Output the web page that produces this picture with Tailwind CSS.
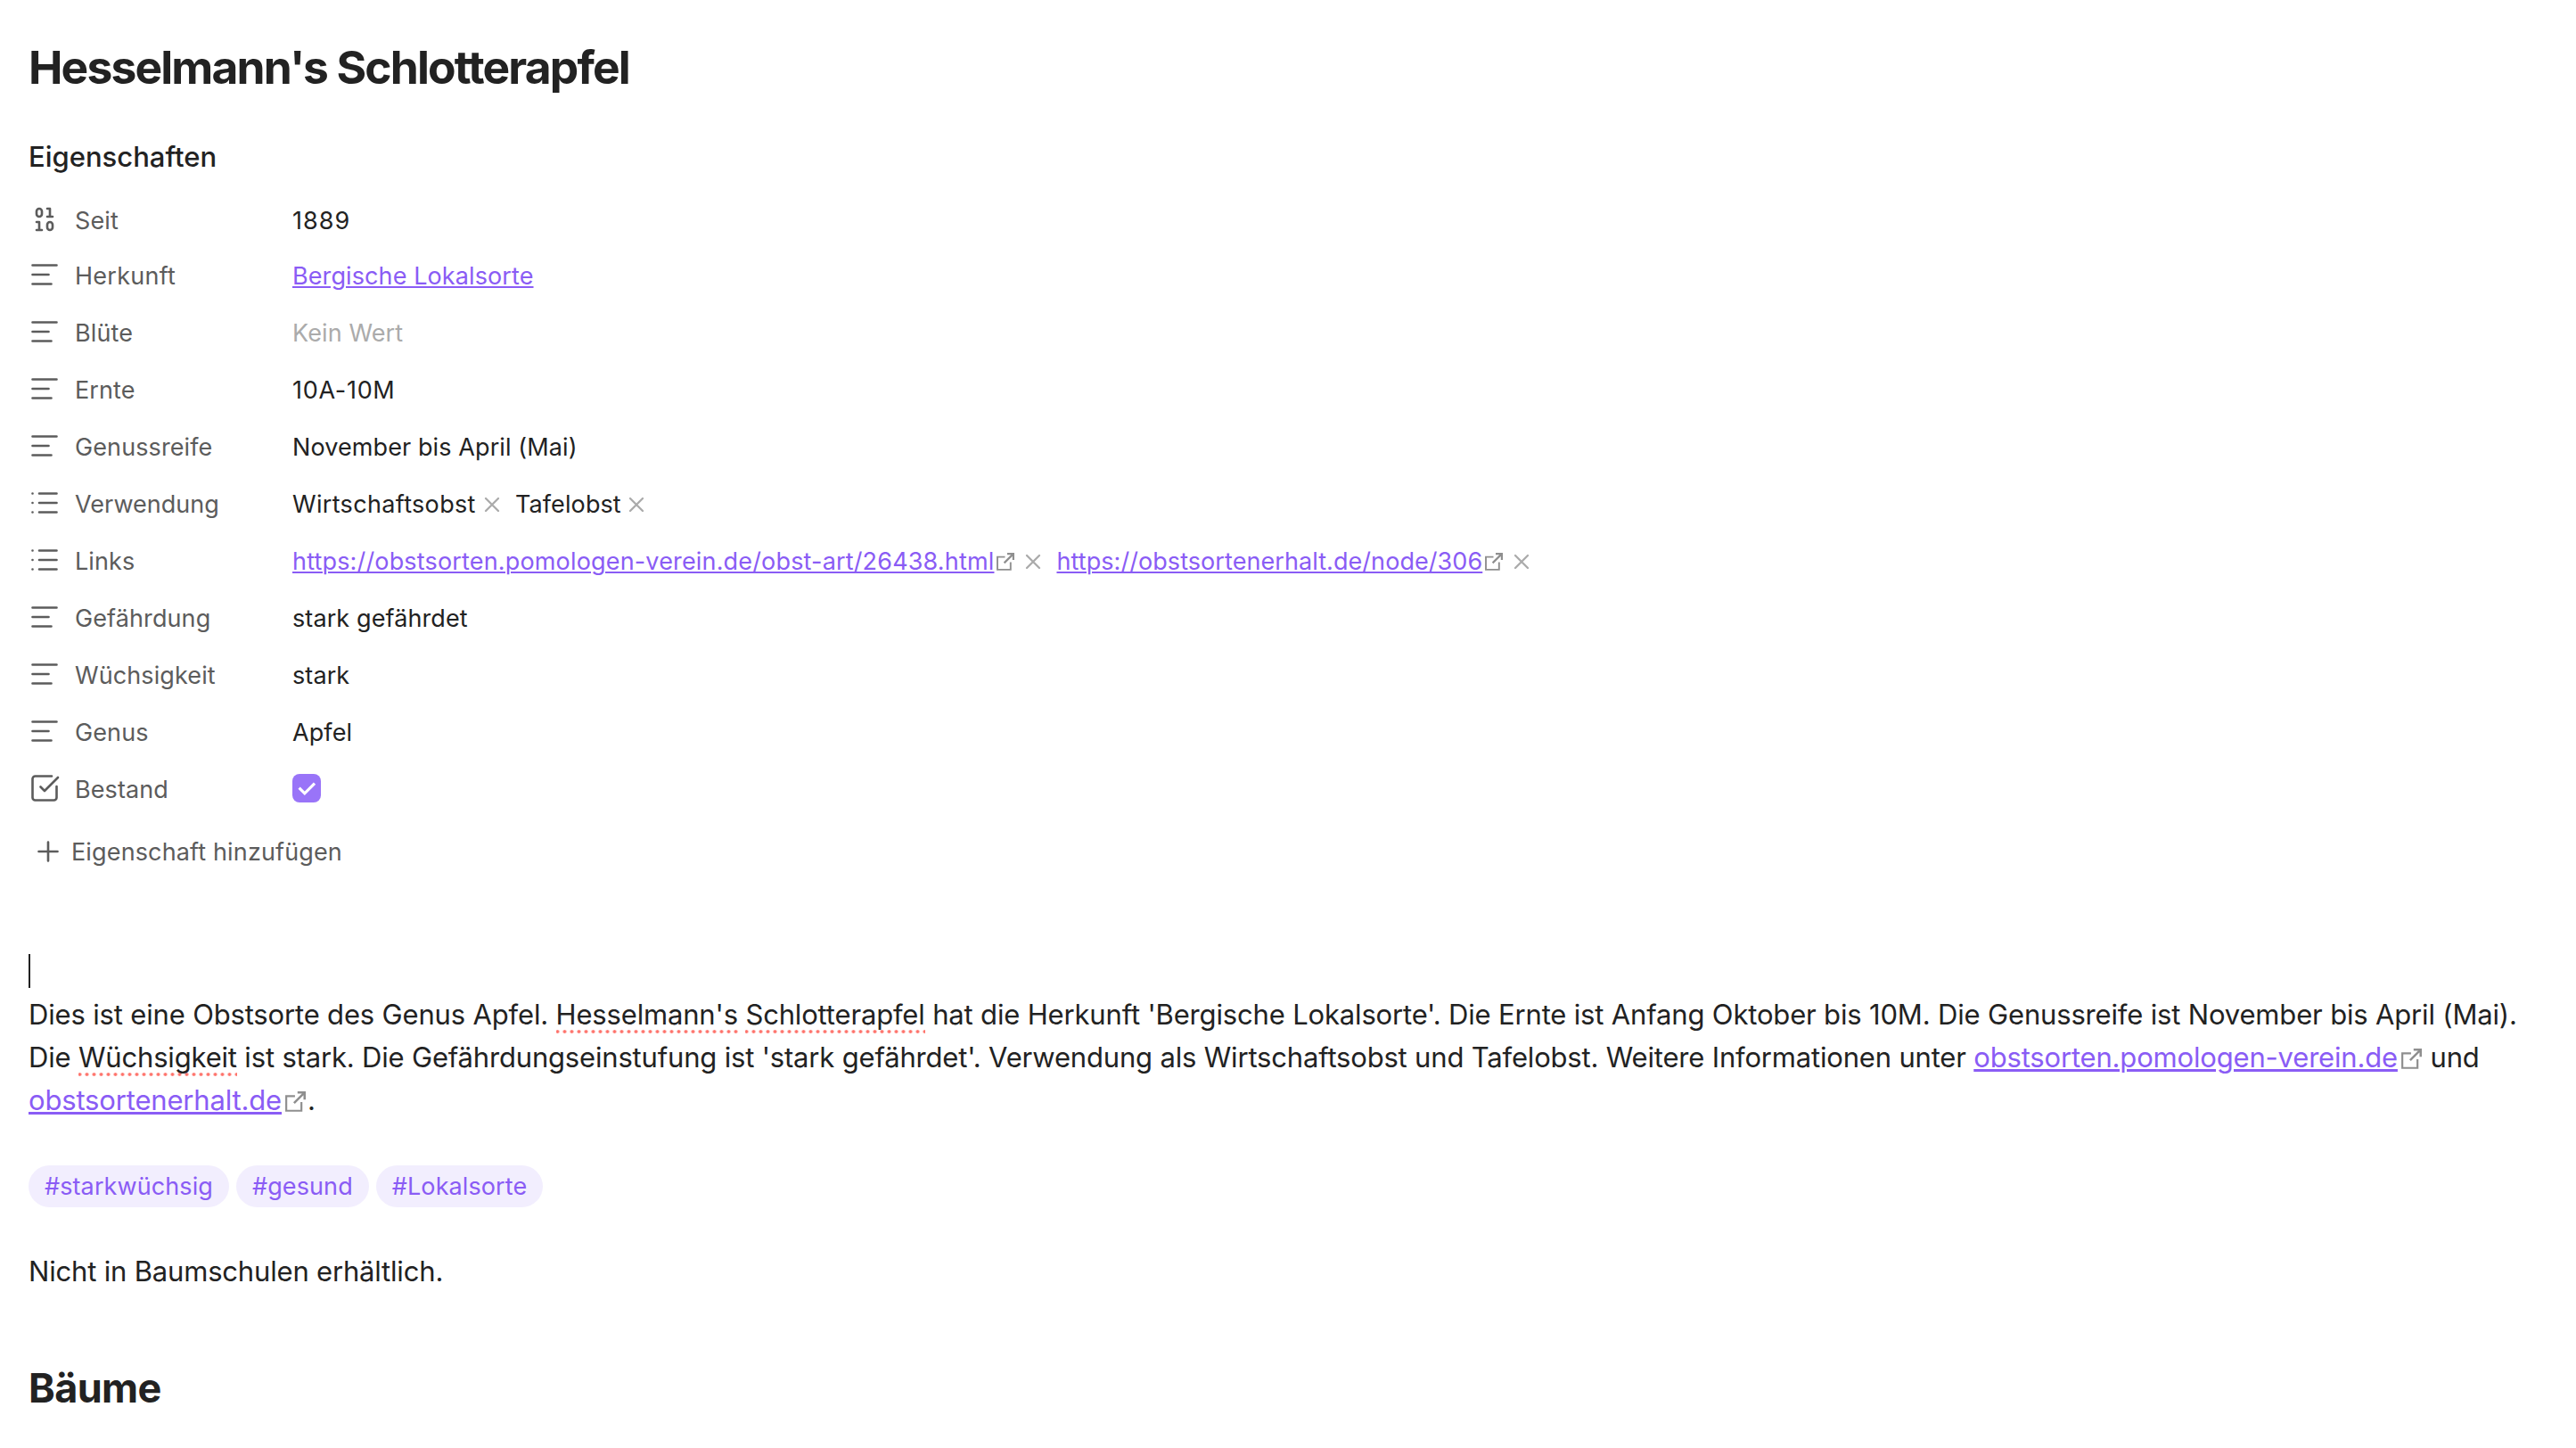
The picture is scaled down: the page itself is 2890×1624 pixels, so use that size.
<!DOCTYPE html>
<html lang="de">
<head>
    <meta charset="UTF-8">
    <meta name="viewport" content="width=device-width, initial-scale=1.0">
    <title>Hesselmann's Schlotterapfel</title>
    <script src="https://cdn.jsdelivr.net/npm/@tailwindcss/browser@4"></script>
</head>
<body class="bg-white text-[#222222] font-['Inter',sans-serif] overflow-hidden">
    <!-- Icon sprites -->
    <svg class="hidden">
        <symbol id="i-text" viewBox="0 0 24 24"><path d="M21 5H3M15 12H3M17 19H3"/></symbol>
        <symbol id="i-list" viewBox="0 0 24 24"><path d="M3 5h.01M3 12h.01M3 19h.01M8 5h13M8 12h13M8 19h13"/></symbol>
        <symbol id="i-binary" viewBox="0 0 24 24"><rect x="14" y="14" width="4" height="6" rx="2"/><rect x="6" y="4" width="4" height="6" rx="2"/><path d="M6 20h4M14 10h4M6 14h2v6M14 4h2v6"/></symbol>
        <symbol id="i-check" viewBox="0 0 24 24"><path d="M21 10.656V19a2 2 0 0 1-2 2H5a2 2 0 0 1-2-2V5a2 2 0 0 1 2-2h12.344"/><path d="m9 11 3 3L22 4"/></symbol>
        <symbol id="i-x" viewBox="0 0 24 24"><path d="M18 6 6 18M6 6l12 12"/></symbol>
        <symbol id="i-ext" viewBox="0 0 20 20"><path d="M9.5 4.6H1v14.3h14.8V10.5" stroke-width="1.9"/><path d="M8.6 11.4 18.4 1.6M12 1.1h6.9V8" stroke-width="2.2"/></symbol>
    </svg>

    <main class="px-8 pt-11">
        <h1 class="h-[62px] leading-[62px] text-[51.5px] font-bold tracking-[-1.85px] whitespace-nowrap">Hesselmann's Schlotterapfel</h1>

        <!-- Properties -->
        <h2 class="mt-[46px] h-12 leading-[48px] text-[31px] font-[550] tracking-[0px]">Eigenschaften</h2>
        <div class="mt-[17px] text-[27px] leading-[40px] tracking-[0.1px] whitespace-nowrap">
            <div class="flex items-center h-[61px]">
                <div class="flex items-center gap-4 w-[296px] text-[#5c5c5c]">
                    <svg class="size-9 mb-1 fill-none stroke-current stroke-[1.75] [stroke-linecap:round] [stroke-linejoin:round]"><use href="#i-binary"/></svg>
                    <span>Seit</span>
                </div>
                <div class="tracking-[1px]">1889</div>
            </div>
            <div class="flex items-center h-16">
                <div class="flex items-center gap-4 w-[296px] text-[#5c5c5c]">
                    <svg class="size-9 mb-1 fill-none stroke-current stroke-[1.75] [stroke-linecap:round]"><use href="#i-text"/></svg>
                    <span class="tracking-[0.25px]">Herkunft</span>
                </div>
                <a class="text-[#8a5cf5] underline decoration-2 underline-offset-2">Bergische Lokalsorte</a>
            </div>
            <div class="flex items-center h-16">
                <div class="flex items-center gap-4 w-[296px] text-[#5c5c5c]">
                    <svg class="size-9 mb-1 fill-none stroke-current stroke-[1.75] [stroke-linecap:round]"><use href="#i-text"/></svg>
                    <span>Blüte</span>
                </div>
                <div class="text-[#ababab]">Kein Wert</div>
            </div>
            <div class="flex items-center h-16">
                <div class="flex items-center gap-4 w-[296px] text-[#5c5c5c]">
                    <svg class="size-9 mb-1 fill-none stroke-current stroke-[1.75] [stroke-linecap:round]"><use href="#i-text"/></svg>
                    <span>Ernte</span>
                </div>
                <div class="tracking-[0.7px]">10A-10M</div>
            </div>
            <div class="flex items-center h-16">
                <div class="flex items-center gap-4 w-[296px] text-[#5c5c5c]">
                    <svg class="size-9 mb-1 fill-none stroke-current stroke-[1.75] [stroke-linecap:round]"><use href="#i-text"/></svg>
                    <span>Genussreife</span>
                </div>
                <div>November bis April (Mai)</div>
            </div>
            <div class="flex items-center h-16">
                <div class="flex items-center gap-4 w-[296px] text-[#5c5c5c]">
                    <svg class="size-9 mb-1 fill-none stroke-current stroke-[1.75] [stroke-linecap:round]"><use href="#i-list"/></svg>
                    <span class="tracking-[0px]">Verwendung</span>
                </div>
                <div class="flex items-center">
                    <span class="w-[206px] tracking-[0.33px]">Wirtschaftsobst</span>
                    <svg class="size-7 ml-1 mb-px fill-none stroke-[#ababab] stroke-2 [stroke-linecap:round]"><use href="#i-x"/></svg>
                    <span class="w-[118px] ml-3">Tafelobst</span>
                    <svg class="size-7 ml-1 mb-px fill-none stroke-[#ababab] stroke-2 [stroke-linecap:round]"><use href="#i-x"/></svg>
                </div>
            </div>
            <div class="flex items-center h-16">
                <div class="flex items-center gap-4 w-[296px] text-[#5c5c5c]">
                    <svg class="size-9 mb-1 fill-none stroke-current stroke-[1.75] [stroke-linecap:round]"><use href="#i-list"/></svg>
                    <span>Links</span>
                </div>
                <div class="flex items-center">
                    <a class="text-[#8a5cf5] tracking-[0.165px] underline decoration-2 underline-offset-2">https://obstsorten.pomologen-verein.de/obst-art/26438.html</a>
                    <svg class="size-5 ml-[3px] fill-none stroke-[#8f8f8f]"><use href="#i-ext"/></svg>
                    <svg class="size-7 ml-[7px] mb-px fill-none stroke-[#ababab] stroke-2 [stroke-linecap:round]"><use href="#i-x"/></svg>
                    <a class="ml-3 text-[#8a5cf5] tracking-[0.065px] underline decoration-2 underline-offset-2">https://obstsortenerhalt.de/node/306</a>
                    <svg class="size-5 ml-[3px] fill-none stroke-[#8f8f8f]"><use href="#i-ext"/></svg>
                    <svg class="size-7 ml-[7px] mb-px fill-none stroke-[#ababab] stroke-2 [stroke-linecap:round]"><use href="#i-x"/></svg>
                </div>
            </div>
            <div class="flex items-center h-16">
                <div class="flex items-center gap-4 w-[296px] text-[#5c5c5c]">
                    <svg class="size-9 mb-1 fill-none stroke-current stroke-[1.75] [stroke-linecap:round]"><use href="#i-text"/></svg>
                    <span>Gefährdung</span>
                </div>
                <div>stark gefährdet</div>
            </div>
            <div class="flex items-center h-16">
                <div class="flex items-center gap-4 w-[296px] text-[#5c5c5c]">
                    <svg class="size-9 mb-1 fill-none stroke-current stroke-[1.75] [stroke-linecap:round]"><use href="#i-text"/></svg>
                    <span>Wüchsigkeit</span>
                </div>
                <div>stark</div>
            </div>
            <div class="flex items-center h-16">
                <div class="flex items-center gap-4 w-[296px] text-[#5c5c5c]">
                    <svg class="size-9 mb-1 fill-none stroke-current stroke-[1.75] [stroke-linecap:round]"><use href="#i-text"/></svg>
                    <span>Genus</span>
                </div>
                <div>Apfel</div>
            </div>
            <div class="flex items-center h-16">
                <div class="flex items-center gap-4 w-[296px] text-[#5c5c5c]">
                    <svg class="size-9 mb-1 fill-none stroke-current stroke-[1.75] [stroke-linecap:round] [stroke-linejoin:round]"><use href="#i-check"/></svg>
                    <span>Bestand</span>
                </div>
                <div class="size-8 mb-1 rounded-lg bg-[#9974f8]">
                    <svg viewBox="0 0 32 32" class="size-8 fill-none stroke-white stroke-[3.2]"><path d="m7.6 15.6 6.2 6.2L25 10.6"/></svg>
                </div>
            </div>
            <div class="flex items-center gap-2 h-16 mt-1.5 pl-1 text-[#5c5c5c]">
                <svg viewBox="0 0 24 24" class="size-9 mb-0.5 fill-none stroke-current stroke-[1.75] [stroke-linecap:round]"><path d="M5 12h14M12 5v14"/></svg>
                <span class="tracking-[0.14px]">Eigenschaft hinzufügen</span>
            </div>
        </div>

        <!-- Note text -->
        <div class="mt-[78px] text-[31px] leading-[48px] tracking-[-0.165px] whitespace-nowrap">
            <div class="h-12 pt-1"><div class="w-0.5 h-[38px] bg-[#222222]"></div></div>
            <p>Dies ist eine Obstsorte des Genus Apfel. <span class="pb-[3px] bg-[radial-gradient(circle,#ff6f67_1.4px,transparent_2.3px)] bg-[length:8px_4px] bg-repeat-x bg-[position:-2.5px_100%]">Hesselmann's</span> <span class="pb-[3px] bg-[radial-gradient(circle,#ff6f67_1.4px,transparent_2.3px)] bg-[length:8px_4px] bg-repeat-x bg-[position:-2.5px_100%]">Schlotterapfel</span> hat die Herkunft 'Bergische Lokalsorte'. Die Ernte ist Anfang Oktober bis 10M. Die Genussreife ist November bis April (Mai).<br>
            <span class="tracking-[-0.18px]">Die <span class="pb-[3px] bg-[radial-gradient(circle,#ff6f67_1.4px,transparent_2.3px)] bg-[length:8px_4px] bg-repeat-x bg-[position:-2.5px_100%]">Wüchsigkeit</span> ist stark. Die Gefährdungseinstufung ist 'stark gefährdet'. Verwendung als Wirtschaftsobst und Tafelobst. Weitere Informationen unter <a class="text-[#8a5cf5] underline decoration-[3px] underline-offset-2">obstsorten.pomologen-verein.de</a></span><svg class="inline-block size-[23px] ml-1 mr-px align-[-2px] fill-none stroke-[#8f8f8f]"><use href="#i-ext"/></svg> und<br>
            <a class="text-[#8a5cf5] underline decoration-[3px] underline-offset-2">obstsortenerhalt.de</a><svg class="inline-block size-[23px] ml-1 mr-0.5 align-[-2px] fill-none stroke-[#8f8f8f]"><use href="#i-ext"/></svg>.</p>
        </div>

        <div class="flex gap-2 mt-[49px] text-[27px] leading-[48px] tracking-[0.1px] text-[#8a5cf5]">
            <span class="h-[47px] px-[18px] rounded-full bg-[#f2eefe]">#starkwüchsig</span>
            <span class="h-[47px] px-[18px] rounded-full bg-[#f2eefe]">#gesund</span>
            <span class="h-[47px] px-[18px] rounded-full bg-[#f2eefe]">#Lokalsorte</span>
        </div>

        <p class="mt-12 text-[31px] leading-[48px] tracking-[-0.18px]">Nicht in Baumschulen erhältlich.</p>

        <h2 class="mt-[79px] text-[45px] leading-[56px] font-bold tracking-[-0.6px]">Bäume</h2>
    </main>
</body>
</html>
